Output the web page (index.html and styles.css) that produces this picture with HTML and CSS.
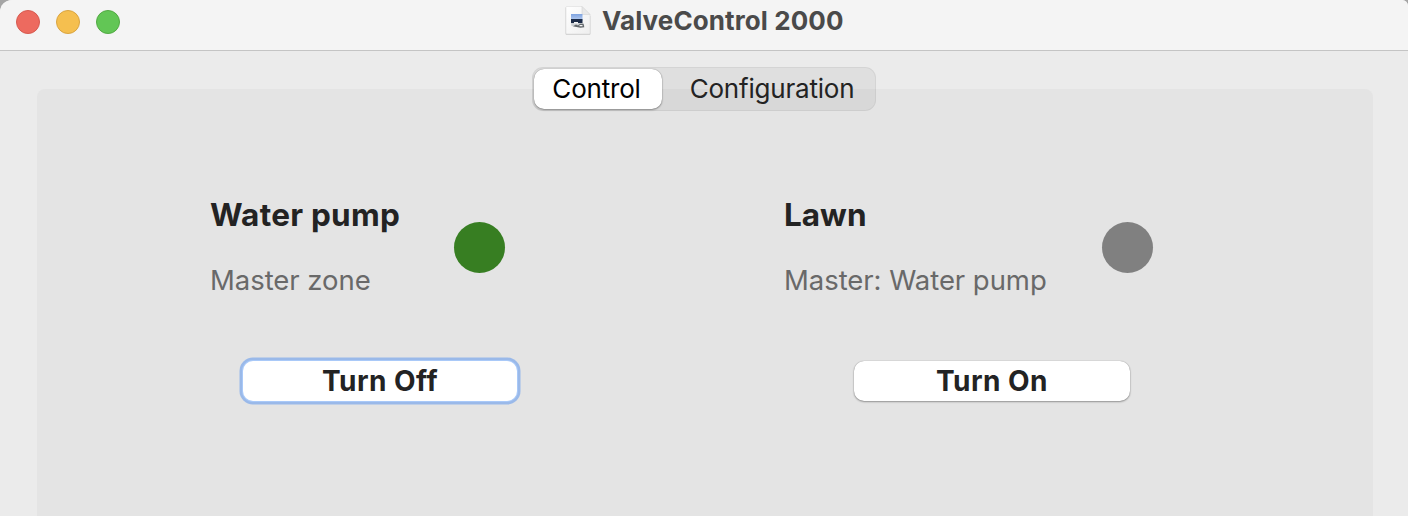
FILE: index.html
```html
<!DOCTYPE html>
<html lang="en">
<head>
<meta charset="utf-8">
<title>ValveControl 2000</title>
<link rel="stylesheet" href="styles.css">
</head>
<body>
<div class="window">
  <header class="titlebar">
    <div class="lights"><span class="light red"></span><span class="light yellow"></span><span class="light green"></span></div>
    <svg class="doc-icon" width="28" height="32" viewBox="0 0 28 32">
      <defs>
        <linearGradient id="sky" x1="0" y1="0" x2="0" y2="1"><stop offset="0" stop-color="#7ea3e0"/><stop offset="1" stop-color="#bfd2f2"/></linearGradient>
        <linearGradient id="paper" x1="0" y1="0" x2="1" y2="1"><stop offset="0" stop-color="#fff"/><stop offset="1" stop-color="#eee"/></linearGradient>
      </defs>
      <path d="M1.500 3.500h16l9 8.500v17.500q0 1.500-1.500 1.500H3q-1.500 0-1.500-1.500z" fill="#b8b8b8" opacity=".6"/>
      <path d="M2.500 2.500H18l8 8V29q0 1-1 1H3q-1 0-1-1V3z" fill="url(#paper)" stroke="#dcdcdc" stroke-width=".6"/>
      <path d="M18 2.500v7q0 1 1 1h7z" fill="#e8e8e8" stroke="#cfcfcf" stroke-width=".5"/>
      <path d="M7 10h11.500v7H7z" fill="url(#sky)"/>
      <path d="M7 15h11.500v4H7z" fill="#1d2c47"/>
      <path d="M7 19h12l1.500 3q-6 2-13 0z" fill="#cdd1d4"/>
      <path d="M9 22.300l3-1.800 2 1 2-1.800h3.500l.8 3.500-4 .500z" fill="#63686c"/>
      <path d="M10 18h4v1.500h-4zm5.500 3h3v1.200h-3z" fill="#f4f4f4"/>
    </svg>
    <h1 class="title">ValveControl 2000</h1>
  </header>
  <main class="content">
    <div class="panel">
      <nav class="tabs">
        <button class="tab active">Control</button>
        <button class="tab">Configuration</button>
      </nav>
      <div class="zones">
        <section class="zone pump">
          <div class="info">
            <div><h2 class="name">Water pump</h2><p class="detail">Master zone</p></div>
            <span class="status on"></span>
          </div>
          <button class="action focused">Turn Off</button>
        </section>
        <section class="zone lawn">
          <div class="info">
            <div><h2 class="name">Lawn</h2><p class="detail">Master: Water pump</p></div>
            <span class="status"></span>
          </div>
          <button class="action">Turn On</button>
        </section>
      </div>
    </div>
  </main>
</div>
</body>
</html>
```
FILE: styles.css
```css
* { box-sizing: border-box; }
html { background: #a5a5a5; }
body { margin: 0; height: 516px; overflow: hidden; font-family: Inter, sans-serif; color: #232323; }
h1, h2, p { margin: 0; white-space: nowrap; }
button { border: 0; padding: 0; font: inherit; color: inherit; white-space: nowrap; }
.window { height: 516px; display: flex; flex-direction: column; background: #ebebeb; border-radius: 12px 6px 0 0; overflow: hidden; }
.titlebar { height: 51px; flex: none; display: flex; background: #f4f4f4; border-bottom: 1px solid #c4c4c4; }
.lights { display: flex; gap: 16px; padding: 10px 0 0 16px; width: 564px; }
.light { width: 24px; height: 24px; border-radius: 50%; border: 1px solid; }
.red { background: #ed6a5f; border-color: #d65a50; }
.yellow { background: #f5bf4f; border-color: #d9a441; }
.green { background: #62c655; border-color: #52a943; }
.doc-icon { margin-top: 4px; }
.title { margin-left: 10px; padding-top: 5px; font-size: 26px; line-height: 32px; font-weight: 700; color: #4a4a4a; letter-spacing: .1px; }
.content { flex: 1; padding: 38px 35px 0 37px; display: grid; }
.panel { display: flex; flex-direction: column; background: #e4e4e4; border-radius: 8px 8px 0 0; }
.tabs { display: flex; align-self: flex-start; margin: -22px 0 0 495px; width: 344px; height: 44px; padding: 2px; border-radius: 11px; background: #0000000d; border: 1px solid #0000000d; }
.tab { display: flex; justify-content: center; background: none; flex: 1; padding-left: 9px; font-size: 26px; line-height: 40px; height: 40px; letter-spacing: -.2px; border-radius: 10px; margin-top: -1px; }
.tab.active { flex: none; width: 128px; margin-left: -1px; padding: 0 3px 0 0; background: #fff; color: #000; box-shadow: 0 0 1px #0007, 0 1px 2px #0005; }
.zones { display: flex; padding: 85px 0 0 174px; }
.zone { display: flex; flex-direction: column; }
.pump { width: 574px; }
.info { display: flex; justify-content: space-between; }
.pump .info { width: 294px; }
.lawn .info { width: 368px; }
.name { margin-left: -1px; font-size: 31.500px; line-height: 38px; font-weight: 700; letter-spacing: .25px; }
.lawn .name { letter-spacing: 0; }
.detail { margin: 28px 0 0 -1px; font-size: 27.500px; line-height: 36px; color: #696969; letter-spacing: -.05px; }
.status { width: 51px; height: 51px; margin-top: 26px; border-radius: 50%; background: #808080; }
.status.on { background: #377e22; }
.action { width: 276px; height: 40px; margin: 63px 0 0 69px; border-radius: 10px; background: #fff; font-size: 28px; line-height: 38px; font-weight: 700; letter-spacing: .45px; box-shadow: 0 0 1px #0006, 0 1px 2px #0005; }
.action.focused { width: 274px; margin-left: 32px; box-shadow: 0 0 0 1px #a9c9f8, 0 0 0 3.500px #9ab9e9; }
```
